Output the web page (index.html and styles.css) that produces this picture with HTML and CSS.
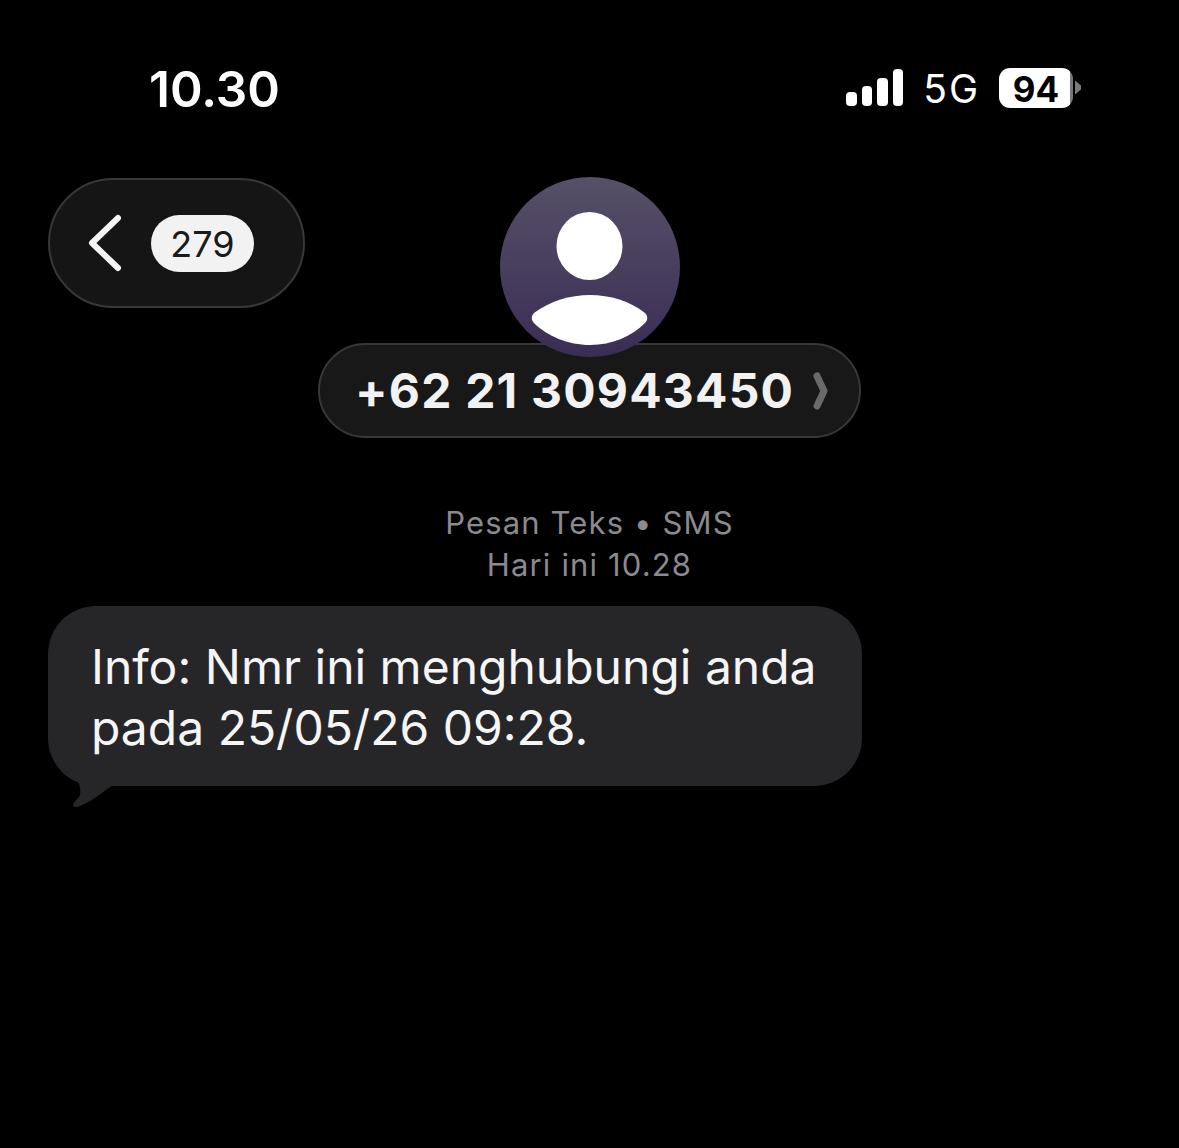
FILE: index.html
```html
<!DOCTYPE html>
<html lang="id">
<head>
  <meta charset="UTF-8">
  <meta name="viewport" content="width=device-width, initial-scale=1.0">
  <title>Pesan</title>
  <link rel="stylesheet" href="styles.css">
</head>
<body>
  <div class="status-bar">
    <span class="time">10.30</span>
    <div class="status-icons">
      <div class="signal">
        <span class="bar bar-1"></span>
        <span class="bar bar-2"></span>
        <span class="bar bar-3"></span>
        <span class="bar bar-4"></span>
      </div>
      <span class="network">5G</span>
      <div class="battery">
        <span class="battery-level">94</span>
        <span class="battery-nub"></span>
      </div>
    </div>
  </div>

  <div class="nav">
    <div class="back-pill">
      <svg class="back-icon" width="36" height="58" viewBox="0 0 36 58">
        <path d="M31 4 L5 29 L31 54" fill="none" stroke="#f4f4f4" stroke-width="6" stroke-linecap="round" stroke-linejoin="round"/>
      </svg>
      <span class="badge">279</span>
    </div>
    <div class="contact">
      <div class="avatar">
        <svg width="180" height="180" viewBox="0 0 180 180">
          <ellipse cx="89.500" cy="69" rx="33" ry="34" fill="#fff"/>
          <path d="M34 136 C50 124 70 118 90 118 C110 118 130 124 145 136 C148 139 148 143 145 146 C132 159 112 168 90 168 C68 168 47 159 34 146 C31 143 31 139 34 136 Z" fill="#fff"/>
        </svg>
      </div>
      <div class="name-pill">
        <span class="name">+62 21 30943450</span>
        <svg class="name-chevron" width="16" height="38" viewBox="0 0 16 38">
          <path d="M4 4 L11 19 L4 34" fill="none" stroke="#6a6a6a" stroke-width="7" stroke-linecap="round" stroke-linejoin="round"/>
        </svg>
      </div>
    </div>
  </div>

  <div class="meta">
    <div>Pesan Teks &bull; SMS</div>
    <div>Hari ini 10.28</div>
  </div>

  <div class="thread">
    <div class="bubble">
      <svg class="tail" width="70" height="75" viewBox="0 0 70 75">
        <path d="M2 0 C4 20 15 35 25 39 C32 44 33 55 32 59 C30 63 26 66 25 68 C25 71 27 71.5 29 71 C40 68 52 58 64 50 L64 0 Z" fill="#262629"/>
      </svg>
      <p>Info: Nmr ini menghubungi anda<br>pada 25/05/26 09:28.</p>
    </div>
  </div>
</body>
</html>
```

FILE: styles.css
```css
* {
  box-sizing: border-box;
}

html, body {
  margin: 0;
  background-color: #000;
}

body {
  min-height: 1148px;
  color: #fff;
  font-family: Inter, "Liberation Sans", sans-serif;
}

.status-bar {
  display: flex;
  justify-content: space-between;
  align-items: center;
  height: 178px;
  padding: 0 98px 0 149px;
}

.time {
  font-size: 49.5px;
  font-weight: 600;
}

.status-icons {
  display: flex;
  align-items: center;
  padding-bottom: 3px;
}

.signal {
  display: flex;
  align-items: flex-end;
  gap: 5px;
  height: 37px;
  margin-right: 20px;
}

.bar {
  width: 10.500px;
  background-color: #fff;
  border-radius: 4px;
}

.bar-1 { height: 14px; }
.bar-2 { height: 20px; }
.bar-3 { height: 28px; }
.bar-4 { height: 37px; }

.network {
  font-size: 39px;
  font-weight: 400;
  letter-spacing: 2px;
  line-height: 44px;
  margin-top: 3px;
  margin-right: 19px;
}

.battery {
  display: flex;
  align-items: center;
}

.battery-level {
  width: 74px;
  height: 40px;
  background: linear-gradient(to right, #fff 96%, #777 96%);
  border-radius: 11px;
  color: #000;
  font-size: 35px;
  font-weight: 700;
  line-height: 42px;
  text-align: center;
}

.battery-nub {
  width: 6px;
  height: 14px;
  margin-left: 2px;
  background-color: #7a7a7a;
  clip-path: polygon(0 0, 100% 35%, 100% 65%, 0 100%);
}

.nav {
  display: grid;
  grid-template-columns: 1fr 543px 1fr;
  padding-left: 48px;
  padding-right: 48px;
}

.back-pill {
  display: flex;
  align-items: center;
  justify-self: start;
  width: 257px;
  height: 130px;
  padding-left: 37px;
  background-color: #151515;
  border: 2px solid #383838;
  border-radius: 65px;
  margin-right: -14px;
}

.back-icon {
  margin-right: 28px;
}

.badge {
  width: 103px;
  height: 57px;
  background-color: #f2f2f2;
  border-radius: 29px;
  color: #1a1a1a;
  font-size: 36px;
  line-height: 59px;
  text-align: center;
}

.contact {
  display: flex;
  flex-direction: column;
  align-items: center;
  grid-column: 2;
}

.avatar {
  position: relative;
  z-index: 1;
  width: 180px;
  height: 180px;
  margin-top: -1px;
  background: linear-gradient(to bottom, #565067, #3a2d55);
  border-radius: 50%;
  overflow: hidden;
}

.avatar svg {
  display: block;
}

.name-pill {
  display: flex;
  align-items: center;
  justify-content: space-between;
  width: 543px;
  height: 95px;
  margin-top: -14px;
  padding: 0 30px 0 35px;
  background-color: #181818;
  border: 2px solid #383838;
  border-radius: 48px;
}

.name {
  font-size: 48px;
  font-weight: 700;
  letter-spacing: 1.2px;
  color: #f2f2f2;
  white-space: nowrap;
}

.meta {
  margin-top: 64px;
  color: #8a8a8f;
  font-size: 31px;
  letter-spacing: 1.15px;
  line-height: 42px;
  text-align: center;
}

.thread {
  padding: 20px 0 0 48px;
}

.bubble {
  position: relative;
  width: 814px;
  height: 180px;
  padding: 30px 43px;
  background-color: #262629;
  border-radius: 48px;
}

.bubble p {
  position: relative;
  margin: 0;
  font-size: 48px;
  line-height: 61px;
  color: #f5f5f5;
  white-space: nowrap;
}

.tail {
  position: absolute;
  left: 0;
  top: 130px;
}
```
